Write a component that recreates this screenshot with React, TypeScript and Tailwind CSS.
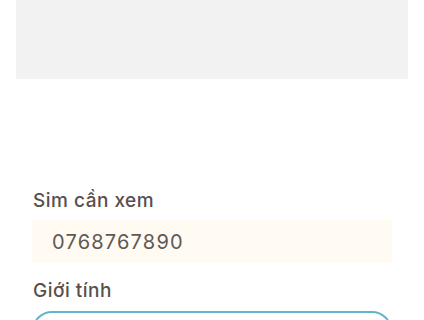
export default function App() {
  return (
    <div className="w-[424px] h-[320px] overflow-hidden bg-white" style={{ fontFamily: "Inter, 'Noto Sans', sans-serif" }}>
      <div className="mx-4 h-[79px] bg-[#f2f2f2]" />
      <div className="px-8 pt-[108px]">
        <div className="text-[19px] leading-[27px] font-medium text-[#57504c] pl-px tracking-[0.5px]">Sim cần xem</div>
        <div className="mt-[6px] h-[43px] bg-[#fffaf2] flex items-center pl-5 text-[20px] text-[#5f5955] tracking-[1.2px] rounded-[2px]">0768767890</div>
        <div className="mt-[14px] text-[19px] leading-[27px] font-medium text-[#57504c] pl-px tracking-[0.5px]">Giới tính</div>
        <div className="mt-[7px] h-[44px] border-2 border-[#62b4cc] rounded-[20px]" />
      </div>
    </div>
  );
}
